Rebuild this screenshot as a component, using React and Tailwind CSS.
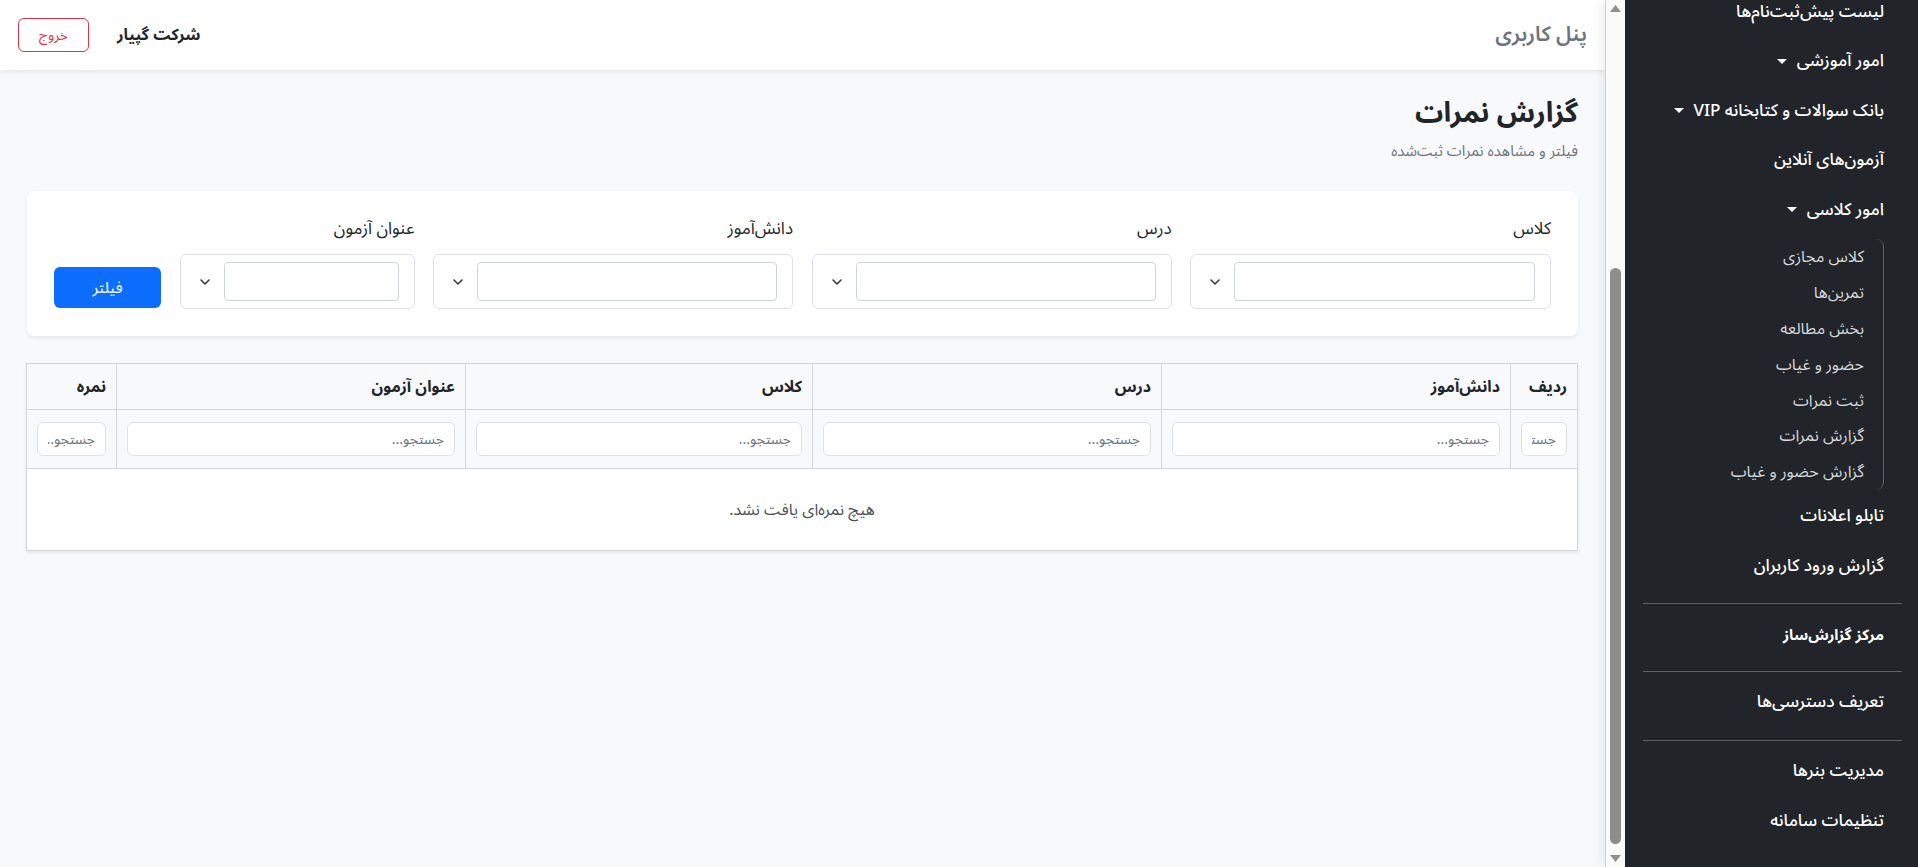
import { useState } from 'react'

const FONT = "[font-family:'Segoe_UI','Noto_Sans_Arabic','Vazirmatn','DejaVu_Sans',sans-serif]"

const COLUMNS = [
    { key: 'row', label: 'ردیف', w: 'w-[67px]' },
    { key: 'student', label: 'دانش\u200cآموز', w: 'w-[349px]' },
    { key: 'lesson', label: 'درس', w: 'w-[349px]' },
    { key: 'class', label: 'کلاس', w: 'w-[347px]' },
    { key: 'exam', label: 'عنوان آزمون', w: 'w-[349px]' },
    { key: 'score', label: 'نمره', w: 'w-[90px]' },
]

const CLASS_LINKS = [
    'کلاس مجازی',
    'تمرین\u200cها',
    'بخش مطالعه',
    'حضور و غیاب',
    'ثبت نمرات',
    'گزارش نمرات',
    'گزارش حضور و غیاب',
]

function Caret() {
    return <span className="inline-block w-0 h-0 mb-[2px] border-x-[5px] border-x-transparent border-t-[5px] border-t-white" />
}

function NavItem({ label, caret, bold, first }) {
    return (
        <div className={`${first ? 'h-[39px] items-start pt-[2px]' : 'h-[49.5px] items-center'} shrink-0 flex gap-[10px] px-[18px] text-white`}>
            <span className={bold ? 'text-[15px] font-bold' : 'text-[17px] font-medium'}>{label}</span>
            {caret && <Caret />}
        </div>
    )
}

function Divider({ top }) {
    return <div className={`shrink-0 ${top} mb-[6px] h-px bg-[#5c6166]`} />
}

function FakeScrollbar() {
    return (
        <div className="w-[20px] h-full shrink-0 bg-[#fafafa] border-l border-[#d2d2d2] flex flex-col items-center">
            <div className="h-[17px] flex items-center justify-center">
                <svg width="11" height="7" viewBox="0 0 11 7"><path d="M5.5 0 L11 7 L0 7 Z" fill="#8f8f8f" /></svg>
            </div>
            <div className="flex-1 w-full flex flex-col items-center pt-[251px] pb-[6px]">
                <div className="w-[11px] flex-1 rounded-full bg-[#8d8d8d]" />
            </div>
            <div className="h-[17px] flex items-center justify-center">
                <svg width="11" height="7" viewBox="0 0 11 7"><path d="M0 0 L11 0 L5.5 7 Z" fill="#8f8f8f" /></svg>
            </div>
        </div>
    )
}

function Sidebar() {
    return (
        <aside className="flex h-full w-[313px] shrink-0 relative z-10 shadow-[-3px_0_10px_rgba(0,0,0,0.08)]">
            {/* list is scrolled to its end, its first item sits at the very top */}
            <nav className="flex-1 bg-[#212529] flex flex-col justify-end overflow-hidden pl-[18px] pr-[16px] pb-[21px]">
                <NavItem label={'لیست پیش\u200cثبت\u200cنام\u200cها'} first />
                <NavItem label="امور آموزشی" caret />
                <NavItem label="بانک سوالات و کتابخانه VIP" caret />
                <NavItem label={'آزمون\u200cهای آنلاین'} />
                <NavItem label="امور کلاسی" caret />
                <div className="shrink-0 mt-[4px] mr-[18px] border-r border-[#5c6166] rounded-r-[8px] pr-[19px]">
                    {CLASS_LINKS.map(item => (
                        <div key={item} className="h-[35.8px] flex items-center text-[16px] text-[#d6d8da]">{item}</div>
                    ))}
                </div>
                <div className="h-[2px] shrink-0" />
                <NavItem label="تابلو اعلانات" />
                <NavItem label="گزارش ورود کاربران" />
                <Divider top="mt-[12px]" />
                <NavItem label={'مرکز گزارش\u200cساز'} bold />
                <Divider top="mt-[11px]" />
                <NavItem label={'تعریف دسترسی\u200cها'} />
                <Divider top="mt-[13px]" />
                <NavItem label="مدیریت بنرها" />
                <NavItem label="تنظیمات سامانه" />
            </nav>
            <FakeScrollbar />
        </aside>
    )
}

function Chevron() {
    return (
        <svg width="12" height="12" viewBox="0 0 12 12" className="shrink-0">
            <polyline points="2,4 6,8 10,4" fill="none" stroke="#343a40" strokeWidth="1.6" strokeLinecap="round" strokeLinejoin="round" />
        </svg>
    )
}

function Field({ label, width }) {
    return (
        <div className={`${width} shrink-0`}>
            <label className="block text-[17px] leading-[24px] mb-[13px]">{label}</label>
            <div className="h-[55px] border border-[#dee2e6] rounded-[6px] flex items-center pr-[15px] pl-[18px] gap-[13px] bg-white">
                <input className="flex-1 min-w-0 h-[39px] border border-[#ced4da] rounded-[4px] bg-white px-[8px] outline-none" />
                <Chevron />
            </div>
        </div>
    )
}

export default function App() {
    const [filters, setFilters] = useState({})

    return (
        <div dir="rtl" className={`flex h-[867px] w-full overflow-hidden bg-[#f8f9fa] text-[#212529] ${FONT}`}>
            <Sidebar />

            <main className="flex-1 min-w-0 flex flex-col">
                {/* Top bar */}
                <header className="h-[70px] shrink-0 bg-white shadow-[0_2px_4px_rgba(0,0,0,0.075)] flex items-center justify-between px-[18px] relative z-[1]">
                    <span className="text-[21px] font-semibold text-[#6c757d]">پنل کاربری</span>
                    <div className="flex items-center gap-[28px]">
                        <span className="text-[16px] font-bold">شرکت گپیار</span>
                        <button className="h-[34px] w-[71px] rounded-[6px] border border-[#dc3545] text-[#dc3545] text-[14px]">خروج</button>
                    </div>
                </header>

                <div className="px-[27px] pt-[25px]">
                    <h1 className="text-[28px] font-bold leading-[38px]">گزارش نمرات</h1>
                    <p className="mt-[8px] text-[15px] leading-[20px] text-[#6c757d]">{'فیلتر و مشاهده نمرات ثبت\u200cشده'}</p>

                    {/* Filters */}
                    <section className="mt-[30px] bg-white rounded-[8px] shadow-[0_2px_4px_rgba(0,0,0,0.075)] px-[27px] pt-[26px] pb-[27px] flex items-end gap-[18.5px]">
                        <Field label="کلاس" width="w-[361px]" />
                        <Field label="درس" width="w-[360px]" />
                        <Field label={'دانش\u200cآموز'} width="w-[360px]" />
                        <Field label="عنوان آزمون" width="w-[235px]" />
                        <button className="w-[107px] h-[41px] mb-[1px] rounded-[6px] bg-[#0d6efd] text-white text-[16px]">فیلتر</button>
                    </section>

                    {/* Results */}
                    <table className="mt-[27px] w-full table-fixed border-collapse bg-white shadow-[0_2px_4px_rgba(0,0,0,0.075)]">
                        <thead>
                            <tr className="h-[46px] bg-[#f8f9fa]">
                                {COLUMNS.map(col => (
                                    <th key={col.key} className={`${col.w} border border-[#d3d6da] px-[10px] text-right text-[16px] font-bold`}>{col.label}</th>
                                ))}
                            </tr>
                            <tr className="h-[59px] bg-[#f8f9fa]">
                                {COLUMNS.map(col => (
                                    <td key={col.key} className="border border-[#d3d6da] px-[10px]">
                                        <input
                                            placeholder="جستجو..."
                                            value={filters[col.key] ?? ''}
                                            onChange={e => setFilters({ ...filters, [col.key]: e.target.value })}
                                            className="w-full h-[34px] border border-[#dee2e6] rounded-[6px] bg-white px-[10px] text-[14px] placeholder:text-[#6c757d] outline-none"
                                        />
                                    </td>
                                ))}
                            </tr>
                        </thead>
                        <tbody>
                            <tr className="h-[82px]">
                                <td colSpan={6} className="border border-[#d3d6da] text-center text-[16px] text-[#495057]">{'هیچ نمره\u200cای یافت نشد.'}</td>
                            </tr>
                        </tbody>
                    </table>
                </div>
            </main>
        </div>
    )
}
